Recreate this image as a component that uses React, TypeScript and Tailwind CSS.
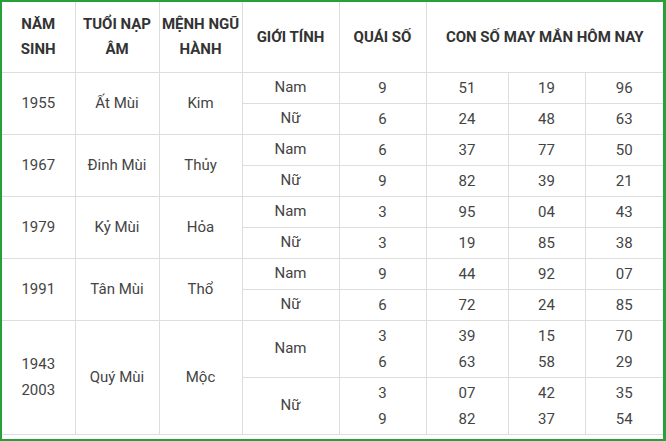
import React from "react";

type G = { g: string; q: string[]; n: string[][] };
type R = { y: string[]; t: string; m: string; rows: G[] };

const data: R[] = [
  { y: ["1955"], t: "Ất Mùi", m: "Kim", rows: [
    { g: "Nam", q: ["9"], n: [["51"], ["19"], ["96"]] },
    { g: "Nữ", q: ["6"], n: [["24"], ["48"], ["63"]] },
  ]},
  { y: ["1967"], t: "Đinh Mùi", m: "Thủy", rows: [
    { g: "Nam", q: ["6"], n: [["37"], ["77"], ["50"]] },
    { g: "Nữ", q: ["9"], n: [["82"], ["39"], ["21"]] },
  ]},
  { y: ["1979"], t: "Kỷ Mùi", m: "Hỏa", rows: [
    { g: "Nam", q: ["3"], n: [["95"], ["04"], ["43"]] },
    { g: "Nữ", q: ["3"], n: [["19"], ["85"], ["38"]] },
  ]},
  { y: ["1991"], t: "Tân Mùi", m: "Thổ", rows: [
    { g: "Nam", q: ["9"], n: [["44"], ["92"], ["07"]] },
    { g: "Nữ", q: ["6"], n: [["72"], ["24"], ["85"]] },
  ]},
  { y: ["1943", "2003"], t: "Quý Mùi", m: "Mộc", rows: [
    { g: "Nam", q: ["3", "6"], n: [["39", "63"], ["15", "58"], ["70", "29"]] },
    { g: "Nữ", q: ["3", "9"], n: [["07", "82"], ["42", "37"], ["35", "54"]] },
  ]},
];

const td = "border border-[#dddddd] text-center align-middle p-0";

function Lines({ v }: { v: string[] }) {
  return (
    <div className="flex flex-col items-center leading-[26px]">
      {v.map((s, i) => (
        <span key={i}>{s}</span>
      ))}
    </div>
  );
}

export default function App() {
  return (
    <div
      className="w-[666px] h-[441px] bg-white border-t-2 border-l-2 border-r-[3px] border-b-2 border-[#28a03a] box-border overflow-hidden"
      style={{ fontFamily: "Roboto, 'Liberation Sans', sans-serif" }}
    >
      <table className="w-[661px] border-collapse table-fixed text-[15px] text-[#444]">
        <colgroup>
          <col className="w-[73px]" />
          <col className="w-[84px]" />
          <col className="w-[83px]" />
          <col className="w-[97px]" />
          <col className="w-[87px]" />
          <col className="w-[82px]" />
          <col className="w-[77px]" />
          <col className="w-[78px]" />
        </colgroup>
        <thead>
          <tr className="h-[70px] font-bold text-[#333]">
            <th className={`${td} border-t-0 border-l-0 leading-[25px]`}>NĂM<br />SINH</th>
            <th className={`${td} border-t-0 leading-[25px]`}>TUỔI NẠP<br />ÂM</th>
            <th className={`${td} border-t-0 leading-[25px]`}>MỆNH NGŨ<br />HÀNH</th>
            <th className={`${td} border-t-0`}>GIỚI TÍNH</th>
            <th className={`${td} border-t-0`}>QUÁI SỐ</th>
            <th className={`${td} border-t-0 border-r-0`} colSpan={3}>CON SỐ MAY MẮN HÔM NAY</th>
          </tr>
        </thead>
        <tbody>
          {data.map((r, ri) =>
            r.rows.map((g, gi) => {
              const h = r.y.length > 1 ? "h-[57px]" : "h-[31px]";
              return (
                <tr key={`${ri}-${gi}`} className={h}>
                  {gi === 0 && (
                    <>
                      <td className={`${td} border-l-0`} rowSpan={2}>
                        <Lines v={r.y} />
                      </td>
                      <td className={td} rowSpan={2}>{r.t}</td>
                      <td className={td} rowSpan={2}>{r.m}</td>
                    </>
                  )}
                  <td className={td}>{g.g}</td>
                  <td className={td}><Lines v={g.q} /></td>
                  {g.n.map((c, ci) => (
                    <td key={ci} className={`${td} ${ci === 2 ? "border-r-0" : ""}`}>
                      <Lines v={c} />
                    </td>
                  ))}
                </tr>
              );
            })
          )}
        </tbody>
      </table>
    </div>
  );
}
